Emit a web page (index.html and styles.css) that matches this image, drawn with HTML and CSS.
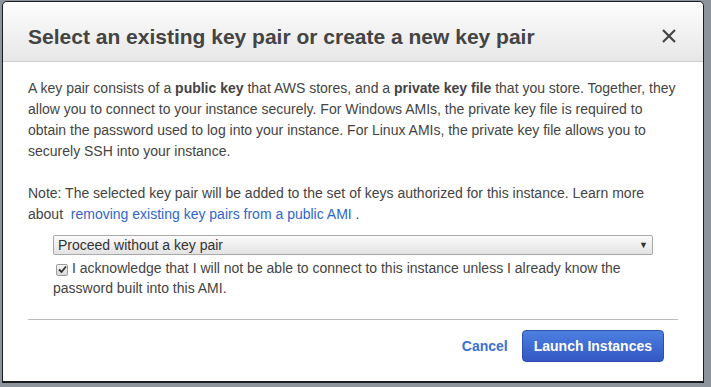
FILE: index.html
```html
<!DOCTYPE html>
<html lang="en">
<head>
    <meta charset="UTF-8">
    <meta name="viewport" content="width=device-width, initial-scale=1.0">
    <title>Select key pair</title>
    <link rel="stylesheet" href="styles.css">
</head>
<body>
    <div class="modal">
        <div class="modal-header">
            <h1>Select an existing key pair or create a new key pair</h1>
            <button type="button" class="close-button" aria-label="Close">
                <svg width="14" height="14" viewBox="0 0 14 14" fill="none" stroke="#444" stroke-width="2.2">
                    <line x1="1" y1="1" x2="13" y2="13"/>
                    <line x1="13" y1="1" x2="1" y2="13"/>
                </svg>
            </button>
        </div>

        <div class="modal-body">
            <p>A key pair consists of a <b>public key</b> that AWS stores, and a <b>private key file</b> that you store. Together, they allow you to connect to your instance securely. For Windows AMIs, the private key file is required to obtain the password used to log into your instance. For Linux AMIs, the private key file allows you to securely SSH into your instance.</p>

            <p class="note">Note: The selected key pair will be added to the set of keys authorized for this instance. Learn more about &nbsp;<a href="#">removing existing key pairs from a public AMI</a> .</p>

            <div class="key-select">
                <span>Proceed without a key pair</span>
                <span class="arrow">&#9660;</span>
            </div>

            <label class="ack">
                <span class="check-box">
                    <svg width="9" height="9" viewBox="0 0 9 9" fill="none" stroke="#333" stroke-width="1.8">
                        <polyline points="1,4.5 3.5,7 8,1.5"/>
                    </svg>
                </span>I acknowledge that I will not be able to connect to this instance unless I already know the password built into this AMI.
            </label>
        </div>

        <div class="modal-footer">
            <hr>
            <div class="actions">
                <a href="#" class="cancel-link">Cancel</a>
                <button type="button" class="launch-button">Launch Instances</button>
            </div>
        </div>
    </div>
</body>
</html>
```

FILE: styles.css
```css
body {
    margin: 0;
    background-color: #8e949b;
    font-family: 'Liberation Sans', Arial, sans-serif;
    color: #444;
}

.modal {
    width: 700px;
    margin: 1px 0 0 2px;
    background-color: #ffffff;
    border: 1px solid #1c1c1c;
    border-bottom-width: 2px;
    border-radius: 5px 5px 0 0;
}

.modal-header {
    height: 60px;
    border-bottom: 1px solid #cfcfcf;
    border-radius: 5px 5px 0 0;
    background: linear-gradient(to bottom, #fdfdfd 0%, #e7e7e7 100%);
    display: flex;
    justify-content: space-between;
    padding: 0 27px 0 25px;
    box-sizing: border-box;
}

h1 {
    margin: 22px 0 0;
    font-size: 21px;
    line-height: 25px;
    font-weight: bold;
    color: #444;
}

.close-button {
    background: none;
    border: none;
    padding: 0;
    margin-top: 27px;
    width: 14px;
    height: 14px;
    cursor: pointer;
}

.close-button svg {
    display: block;
}

.modal-body {
    padding: 16px 25px 0;
    font-size: 14px;
    line-height: 21px;
}

.modal-body p {
    margin: 0;
}

.modal-body .note {
    margin-top: 21px;
}

a {
    color: #3066cc;
    text-decoration: none;
}

.key-select {
    margin: 10px 0 0 25px;
    width: 600px;
    height: 20px;
    box-sizing: border-box;
    border: 1px solid #a9a9a9;
    border-radius: 2px;
    background: linear-gradient(to bottom, #fbfbfb 0%, #e3e3e3 100%);
    display: flex;
    justify-content: space-between;
    align-items: center;
    padding: 0 4px 0 4px;
    color: #333;
    line-height: 18px;
}

.key-select .arrow {
    font-size: 9px;
    color: #333;
}

.ack {
    display: block;
    width: 600px;
    margin: 3px 0 0 25px;
    line-height: 20px;
}

.check-box {
    display: inline-flex;
    align-items: center;
    justify-content: center;
    width: 12px;
    height: 12px;
    margin: 0 4px 0 3px;
    vertical-align: -1px;
    border: 1px solid #9a9a9a;
    border-radius: 2px;
    background: linear-gradient(to bottom, #f4f4f4 0%, #d8d8d8 100%);
    box-sizing: border-box;
}

.check-box svg {
    display: block;
}

.modal-footer hr {
    margin: 21px 25px 0;
    border: none;
    border-top: 1px solid #bbbbbb;
}

.actions {
    display: flex;
    justify-content: flex-end;
    align-items: center;
    gap: 14px;
    padding: 10px 39px 19px 0;
}

.cancel-link {
    font-size: 14px;
    font-weight: bold;
    color: #3a6fd6;
}

.launch-button {
    height: 32px;
    padding: 0 11px;
    font-family: 'Liberation Sans', Arial, sans-serif;
    font-size: 14px;
    font-weight: bold;
    color: #ffffff;
    border: 1px solid #2c4fb0;
    border-radius: 4px;
    background: linear-gradient(to bottom, #4c80e0 0%, #3357c4 100%);
    cursor: pointer;
}
```
